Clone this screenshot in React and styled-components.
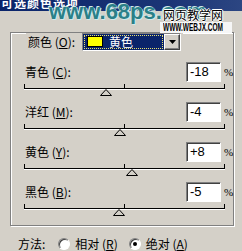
import styled, { createGlobalStyle } from 'styled-components'

const GlobalStyle = createGlobalStyle`
  html, body { margin: 0; padding: 0; background: #D4D0C8; }
  body { font-family: "Noto Sans CJK SC", "Liberation Sans", sans-serif; }
`

const Window = styled.div`
  position: relative;
  width: 242px;
  height: 251px;
  overflow: hidden;
  background: #D4D0C8;
  color: #000;
  font-size: 12px;
`

const TitleBar = styled.div`
  height: 11px;
  overflow: hidden;
  background: linear-gradient(90deg, #0A246A 0%, #1B3576 70%, #2C4682 100%);
`

const TitleText = styled.div`
  margin-top: -4px;
  padding-left: 1px;
  color: #fff;
  font-weight: bold;
  font-size: 12px;
  line-height: 13px;
  letter-spacing: 1px;
`

const Watermark = styled.div`
  position: absolute;
  left: 49px;
  top: 1px;
  z-index: 1;
  white-space: nowrap;
  font-family: "Liberation Sans", Arial, sans-serif;
  font-weight: bold;
  font-size: 22px;
  line-height: 22px;
  color: #2B8088;
  text-shadow: 0 0 1px #d8f0f0, 1px 1px 0 #cfe8e8, -1px -1px 0 #cfe8e8;
`

const Stamp = styled.div`
  position: absolute;
  left: 160px;
  top: 8px;
  width: 72px;
  z-index: 2;
  display: flex;
  flex-direction: column;
  align-items: flex-start;
`

const StampTitle = styled.div`
  padding: 0 4px 0 3px;
  font-size: 12px;
  line-height: 14px;
  color: #000;
  text-shadow: 1px 0 0 #fff, -1px 0 0 #fff, 0 1px 0 #fff, 0 -1px 0 #fff;
`

const StampUrl = styled.div`
  align-self: stretch;
  background: #f6f6f6;
  padding: 1px 0 1px 3px;
  font-family: "Liberation Sans", Arial, sans-serif;
  font-weight: bold;
  font-size: 10px;
  line-height: 9px;
  white-space: nowrap;
  span {
    display: inline-block;
    transform: scaleX(0.65);
    transform-origin: left center;
  }
`

const Group = styled.div`
  margin: 21px 0 0 10px;
  width: 224px;
  box-sizing: border-box;
  border: 1px solid #808080;
  box-shadow: inset 1px 1px 0 #fff, 1px 1px 0 #fff;
  padding: 0 1px 3px 13px;
`

const Header = styled.div`
  display: inline-flex;
  align-items: center;
  gap: 7px;
  margin: -7px 0 0 2px;
  padding: 0 2px;
  height: 18px;
  background: #D4D0C8;
`

const Select = styled.div`
  display: flex;
  width: 99px;
  height: 18px;
  box-sizing: border-box;
  border: 1px solid;
  border-color: #808080 #fff #fff #808080;
  background: #fff;
`

const SelectValue = styled.div`
  flex: 1;
  display: flex;
  align-items: center;
  gap: 6px;
  background: #0A246A;
  outline: 1px dotted #e8e070;
  outline-offset: -2px;
  padding-left: 4px;
  color: #fff;
`

const Swatch = styled.div`
  width: 16px;
  height: 11px;
  box-sizing: border-box;
  border: 1px solid #000;
  background: ${p => p.$color};
`

const DropButton = styled.div`
  width: 16px;
  display: flex;
  align-items: center;
  justify-content: center;
  background: #D4D0C8;
  box-sizing: border-box;
  border: 1px solid;
  border-color: #fff #404040 #404040 #fff;
  box-shadow: inset -1px -1px 0 #808080;
`

const Sliders = styled.div`
  margin-top: 11px;
  display: flex;
  flex-direction: column;
`

const SliderBlock = styled.div`
  height: 40px;
  display: flex;
  flex-direction: column;
`

const FieldRow = styled.div`
  display: flex;
  align-items: center;
  height: 20px;
`

const Label = styled.span`
  flex: 1;
  padding-left: 1px;
  line-height: 14px;
`

const NumBox = styled.div`
  width: 35px;
  height: 20px;
  box-sizing: border-box;
  border: 1px solid;
  border-color: #808080 #fff #fff #808080;
  box-shadow: inset 1px 1px 0 #404040;
  background: #fff;
  padding-left: 3px;
  font-family: "Liberation Sans", Arial, sans-serif;
  font-size: 13px;
  line-height: 18px;
`

const Pct = styled.span`
  width: 8px;
  margin-left: 3px;
  font-family: "Liberation Serif", serif;
  font-size: 11px;
`

const Track = styled.div`
  position: relative;
  width: 201px;
  height: 1px;
  margin-top: 6px;
  background: #000;
  box-shadow: 0 1px 0 #fff;
`

const Tick = styled.div`
  position: absolute;
  top: -4px;
  left: ${p => p.$at}px;
  width: 1px;
  height: 4px;
  background: #000;
`

const Thumb = styled.svg`
  position: absolute;
  top: 1px;
  left: ${p => 100 + p.$value}px;
  transform: translateX(-50%);
`

const MethodRow = styled.div`
  display: flex;
  align-items: center;
  height: 14px;
  margin-top: 11px;
  padding-left: 18px;
`

const MethodLabel = styled.span`
  margin-right: 13px;
`

const Radio = styled.span`
  width: 12px;
  height: 12px;
  box-sizing: border-box;
  border-radius: 50%;
  border: 1px solid;
  border-color: #808080 #fff #fff #808080;
  box-shadow: inset 1px 1px 0 #404040;
  background: #fff;
  display: flex;
  align-items: center;
  justify-content: center;
  margin-right: 5px;
  &::after {
    content: "";
    width: 4px;
    height: 4px;
    border-radius: 50%;
    background: ${p => (p.$checked ? '#000' : 'transparent')};
  }
`

const Option = styled.span`
  margin-right: 11px;
`

const sliders = [
  { name: '青色', key: 'C', value: -18 },
  { name: '洋红', key: 'M', value: -4 },
  { name: '黄色', key: 'Y', value: 8 },
  { name: '黑色', key: 'B', value: -5 },
]

function fmt(v) {
  return v > 0 ? `+${v}` : `${v}`
}

export default function App() {
  return (
    <>
      <GlobalStyle />
      <Window>
        <TitleBar>
          <TitleText>可选颜色选项</TitleText>
        </TitleBar>
        <Group>
          <Header>
            <span>颜色 (<u>O</u>):</span>
            <Select>
              <SelectValue>
                <Swatch $color="#FFFF00" />
                <span>黄色</span>
              </SelectValue>
              <DropButton>
                <svg width="7" height="4" viewBox="0 0 7 4">
                  <polygon points="0,0 7,0 3.5,4" fill="#000" />
                </svg>
              </DropButton>
            </Select>
          </Header>
          <Sliders>
            {sliders.map(s => (
              <SliderBlock key={s.key}>
                <FieldRow>
                  <Label>{s.name} (<u>{s.key}</u>):</Label>
                  <NumBox>{fmt(s.value)}</NumBox>
                  <Pct>%</Pct>
                </FieldRow>
                <Track>
                  <Tick $at={0} />
                  <Tick $at={100} />
                  <Tick $at={200} />
                  <Thumb $value={s.value} width="12" height="7" viewBox="0 0 12 7">
                    <polygon points="6,0.5 11.5,6.5 0.5,6.5" fill="#D4D0C8" stroke="#000" strokeWidth="1" />
                  </Thumb>
                </Track>
              </SliderBlock>
            ))}
          </Sliders>
        </Group>
        <MethodRow>
          <MethodLabel>方法:</MethodLabel>
          <Radio />
          <Option>相对 (<u>R</u>)</Option>
          <Radio $checked />
          <Option>绝对 (<u>A</u>)</Option>
        </MethodRow>
        <Watermark>www.68ps.com</Watermark>
        <Stamp>
          <StampTitle>网页教学网</StampTitle>
          <StampUrl><span>WWW.WEBJX.COM</span></StampUrl>
        </Stamp>
      </Window>
    </>
  )
}
